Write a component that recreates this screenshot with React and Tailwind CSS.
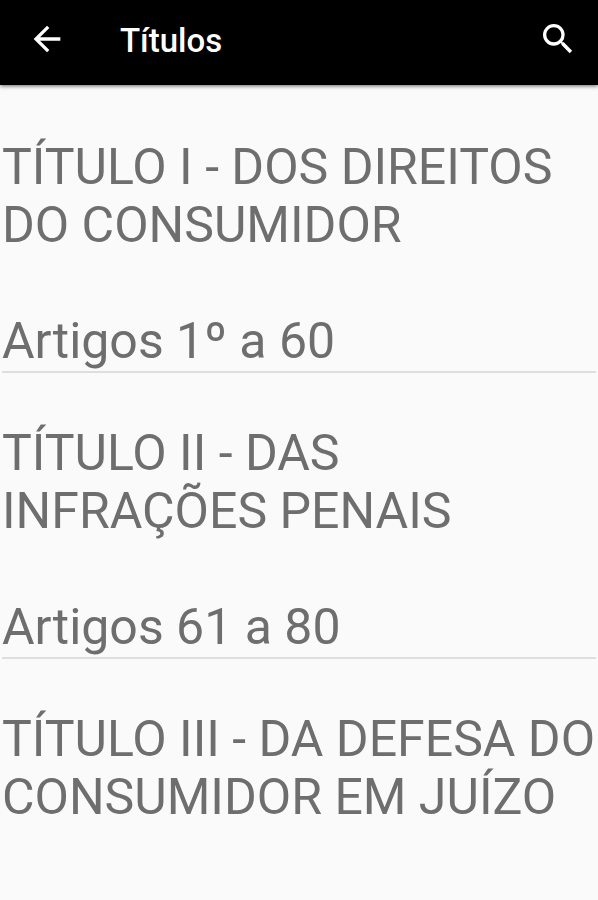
import { MdArrowBack, MdSearch } from 'react-icons/md';

const titulos = [
  { id: 1, name: 'TÍTULO I - DOS DIREITOS DO CONSUMIDOR', artigos: 'Artigos 1º a 60' },
  { id: 2, name: 'TÍTULO II - DAS INFRAÇÕES PENAIS', artigos: 'Artigos 61 a 80' },
  { id: 3, name: 'TÍTULO III - DA DEFESA DO CONSUMIDOR EM JUÍZO' },
];

function Topbar() {
  return (
    <header className="relative flex h-[85px] items-center bg-black pr-5 pb-2 pl-[27px] text-white shadow-[0_1px_4px_rgba(0,0,0,0.6)]">
      <button type="button" aria-label="Voltar">
        <MdArrowBack className="size-10" />
      </button>
      <h1 className="ml-[53px] pt-1 text-[33px] font-medium">Títulos</h1>
      <button type="button" aria-label="Pesquisar" className="ml-auto">
        <MdSearch className="size-10" />
      </button>
    </header>
  );
}

export default function App() {
  return (
    <div className="flex h-screen flex-col overflow-hidden bg-[#fafafa] font-[Roboto,sans-serif]">
      <Topbar />
      <ul className="px-[2px] pt-[2px] text-[50px] leading-[58px] text-[#6e6e6e]">
        {titulos.map((t) => (
          <li key={t.id} className="border-b-2 border-[#dedede] pt-[51px] pb-px last:border-b-0">
            <h2>{t.name}</h2>
            {t.artigos && <p className="pt-[58px]">{t.artigos}</p>}
          </li>
        ))}
      </ul>
    </div>
  );
}
